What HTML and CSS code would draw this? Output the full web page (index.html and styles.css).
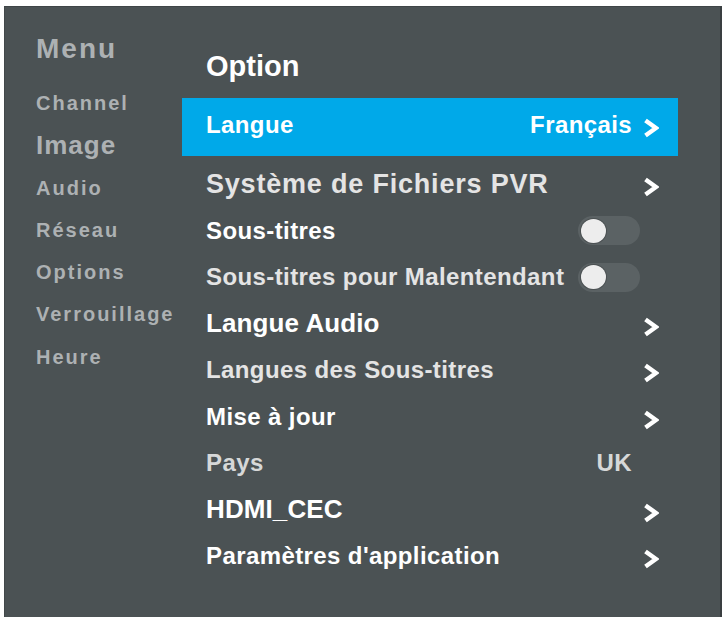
FILE: index.html
```html
<!DOCTYPE html>
<html lang="fr">

<head>
    <meta charset="utf-8">
    <meta name="viewport" content="width=device-width, initial-scale=1.0">
    <title>Option</title>
    <link rel="stylesheet" href="styles.css">
</head>

<body>

    <div class="panel">

        <!-- menu a gauche -->
        <aside class="side">
            <div class="side_titre">Menu</div>
            <ul class="side_liste">
                <li>Channel</li>
                <li class="stor">Image</li>
                <li>Audio</li>
                <li>Réseau</li>
                <li>Options</li>
                <li>Verrouillage</li>
                <li>Heure</li>
            </ul>
        </aside>

        <!-- option liste -->
        <main class="option">
            <h1>Option</h1>

            <div class="linje valgt">
                <span class="navn">Langue</span>
                <span class="vaerdi">Français</span>
                <span class="pil"><svg viewBox="0 0 16 20" width="16" height="20"><polyline points="2.5,2.5 13,10 2.5,17.5"/></svg></span>
            </div>

            <ul class="liste">
                <li class="linje">
                    <span class="navn graa stor">Système de Fichiers PVR</span>
                    <span class="pil"><svg viewBox="0 0 16 20" width="16" height="20"><polyline points="2.5,2.5 13,10 2.5,17.5"/></svg></span>
                </li>
                <li class="linje">
                    <span class="navn">Sous-titres</span>
                    <span class="knap"></span>
                </li>
                <li class="linje">
                    <span class="navn graa">Sous-titres pour Malentendant</span>
                    <span class="knap"></span>
                </li>
                <li class="linje">
                    <span class="navn mellem">Langue Audio</span>
                    <span class="pil"><svg viewBox="0 0 16 20" width="16" height="20"><polyline points="2.5,2.5 13,10 2.5,17.5"/></svg></span>
                </li>
                <li class="linje">
                    <span class="navn graa">Langues des Sous-titres</span>
                    <span class="pil"><svg viewBox="0 0 16 20" width="16" height="20"><polyline points="2.5,2.5 13,10 2.5,17.5"/></svg></span>
                </li>
                <li class="linje">
                    <span class="navn">Mise à jour</span>
                    <span class="pil"><svg viewBox="0 0 16 20" width="16" height="20"><polyline points="2.5,2.5 13,10 2.5,17.5"/></svg></span>
                </li>
                <li class="linje">
                    <span class="navn mork">Pays</span>
                    <span class="vaerdi mork">UK</span>
                    <span class="pil"></span>
                </li>
                <li class="linje">
                    <span class="navn mellem">HDMI_CEC</span>
                    <span class="pil"><svg viewBox="0 0 16 20" width="16" height="20"><polyline points="2.5,2.5 13,10 2.5,17.5"/></svg></span>
                </li>
                <li class="linje">
                    <span class="navn">Paramètres d'application</span>
                    <span class="pil"><svg viewBox="0 0 16 20" width="16" height="20"><polyline points="2.5,2.5 13,10 2.5,17.5"/></svg></span>
                </li>
            </ul>
        </main>

    </div>

</body>

</html>
```

FILE: styles.css
```css
body {
    margin: 0;
    background-color: white;
    font-family: "Liberation Sans", Arial, sans-serif;
    overflow: hidden;
}

ul {
    list-style: none;
    margin: 0;
    padding: 0;
}

.panel {
    display: flex;
    box-sizing: border-box;
    width: 718px;
    height: 640px;
    margin: 6px 0 0 4px;
    background-color: #4b5254;
    border-top: 1px solid #3f4547;
    border-left: 1px solid #42484a;
    border-right: 2px solid #3a3f41;
}

/* venstre menu */

.side {
    width: 177px;
    flex-shrink: 0;
    box-sizing: border-box;
    padding: 26px 0 0 31px;
    color: #adb1b3;
    font-weight: bold;
}

.side_titre {
    font-size: 28px;
    line-height: 32px;
    letter-spacing: 2px;
}

.side_liste {
    margin-top: 17px;
}

.side_liste li {
    height: 42.3px;
    line-height: 42.3px;
    font-size: 20px;
    letter-spacing: 2px;
}

.side_liste .stor {
    font-size: 26px;
    letter-spacing: 1px;
}

/* option */

.option {
    width: 496px;
    padding-top: 39px;
    color: white;
}

.option h1 {
    margin: 0 0 12px 24px;
    font-size: 29px;
    line-height: 40px;
    font-weight: bold;
}

.linje {
    display: flex;
    align-items: center;
    box-sizing: border-box;
    height: 46.5px;
    padding: 0 19px 0 24px;
    font-size: 24px;
    font-weight: bold;
    letter-spacing: 0.4px;
}

.valgt {
    height: 58px;
    padding-bottom: 4px;
    background-color: #00a9e9;
}

.liste {
    margin-top: 5px;
}

.navn {
    white-space: nowrap;
}

.graa {
    color: #e4e4e4;
}

.mork {
    color: #d6d8d8;
}

.stor {
    font-size: 27px;
    letter-spacing: 0.8px;
}

.mellem {
    font-size: 26px;
    letter-spacing: 0.1px;
}

.vaerdi {
    margin-left: auto;
}

.pil {
    display: flex;
    justify-content: flex-end;
    width: 27px;
    margin-left: auto;
    margin-top: 6px;
}

.vaerdi + .pil {
    margin-left: 0;
}

.pil svg {
    fill: none;
    stroke: white;
    stroke-width: 4.5;
    stroke-linejoin: miter;
}

.knap {
    position: relative;
    width: 62px;
    height: 29px;
    margin-left: auto;
    margin-right: 19px;
    border-radius: 15px;
    background-color: #5b6264;
}

.knap::after {
    content: "";
    position: absolute;
    left: 3px;
    top: 2.5px;
    width: 25px;
    height: 24px;
    border-radius: 50%;
    background-color: #ededed;
    box-shadow: 0 0 0 1px rgba(0, 0, 0, 0.18);
}
```
